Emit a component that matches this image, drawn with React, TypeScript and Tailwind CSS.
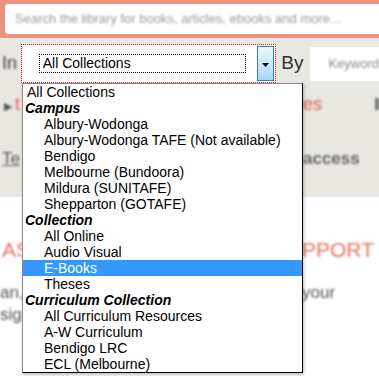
import React from 'react';

type Option = { label: string; kind: 'top' | 'group' | 'item'; selected?: boolean };

const options: Option[] = [
  { label: 'All Collections', kind: 'top' },
  { label: 'Campus', kind: 'group' },
  { label: 'Albury-Wodonga', kind: 'item' },
  { label: 'Albury-Wodonga TAFE (Not available)', kind: 'item' },
  { label: 'Bendigo', kind: 'item' },
  { label: 'Melbourne (Bundoora)', kind: 'item' },
  { label: 'Mildura (SUNITAFE)', kind: 'item' },
  { label: 'Shepparton (GOTAFE)', kind: 'item' },
  { label: 'Collection', kind: 'group' },
  { label: 'All Online', kind: 'item' },
  { label: 'Audio Visual', kind: 'item' },
  { label: 'E-Books', kind: 'item', selected: true },
  { label: 'Theses', kind: 'item' },
  { label: 'Curriculum Collection', kind: 'group' },
  { label: 'All Curriculum Resources', kind: 'item' },
  { label: 'A-W Curriculum', kind: 'item' },
  { label: 'Bendigo LRC', kind: 'item' },
  { label: 'ECL (Melbourne)', kind: 'item' },
];

function OptionRow({ option }: { option: Option }) {
  const base = 'h-[16px] leading-[16px] whitespace-nowrap text-[14px]';
  if (option.kind === 'group') {
    return <div className={`${base} pl-[2px] font-bold italic text-black`}>{option.label}</div>;
  }
  if (option.kind === 'top') {
    return <div className={`${base} pl-[4px] text-black`}>{option.label}</div>;
  }
  return (
    <div className={`${base} pl-[21px] ${option.selected ? 'bg-[#3399ff] text-white' : 'text-black'}`}>
      {option.label}
    </div>
  );
}

export default function App() {
  return (
    <div className="relative w-[379px] h-[376px] overflow-hidden bg-white font-['Liberation_Sans',Arial,sans-serif]">
      {/* page behind the open select */}
      <div className="bg-[#e9e7e2] pb-[28px]">
        <div className="bg-[#e8937e] pt-[4px] pb-[4px] pl-[5px]">
          <div className="h-[30px] bg-white rounded-l-[3px] flex items-center pl-[10px]">
            <span className="blur-[1.2px] text-[13px] text-[#9a9a9a] whitespace-nowrap">
              Search the library for books, articles, ebooks and more...
            </span>
          </div>
        </div>

        <div className="mt-[6px] flex items-center h-[39px]">
          <span className="w-[21px] pl-[2px] text-[18px] text-[#444] blur-[1px]">In</span>
          <div className="w-[259px] h-[39px] border border-dotted border-[#e01010] bg-white flex items-center pl-[17px]">
            <div className="w-[207px] h-[19px] border border-dotted border-black flex items-center pl-[3px] text-[14px] text-black whitespace-nowrap">
              All Collections
            </div>
            <div className="ml-auto mr-[1px] w-[17px] h-[35px] border border-[#3c7fb1] bg-gradient-to-b from-[#eef8fe] to-[#a6d8f4] flex items-center justify-center pt-[2px]">
              <svg width="7" height="4" viewBox="0 0 7 4">
                <path d="M0 0h7L3.5 4z" fill="#000" />
              </svg>
            </div>
          </div>
          <span className="ml-[5px] text-[19px] text-[#333]">By</span>
          <div className="ml-[7px] flex-1 h-[34px] bg-white flex items-center pl-[18px]">
            <span className="blur-[1.2px] text-[13px] text-[#888]">Keyword</span>
          </div>
        </div>

        <div className="mt-[11px] grid grid-cols-[22px_281px_1fr] h-[20px] leading-[20px]">
          <div className="overflow-hidden whitespace-nowrap blur-[1px] text-[18px]">
            <span className="text-[#555] text-[11px] pl-[4px] pr-[3px]">▶</span>
            <span className="text-[#e2604c]">t</span>
          </div>
          <div />
          <div className="flex items-center whitespace-nowrap blur-[1px] text-[18px]">
            <span className="text-[#e2604c]">es</span>
            <span className="ml-auto w-[4px] h-[12px] bg-[#777]" />
          </div>
        </div>

        <div className="mt-[35px] grid grid-cols-[22px_281px_1fr] h-[20px] leading-[20px]">
          <div className="overflow-hidden whitespace-nowrap blur-[1px] text-[17px] text-[#555]">
            <span className="underline pl-[2px]">Te</span>
          </div>
          <div />
          <div className="whitespace-nowrap blur-[1px] text-[17px] font-semibold text-[#666]">access</div>
        </div>
      </div>

      <div className="mt-[41px] grid grid-cols-[22px_280px_1fr] h-[24px] leading-[24px] text-[21px] text-[#e8705e] blur-[1.2px] whitespace-nowrap">
        <div className="overflow-hidden pl-[2px]">AS</div>
        <div />
        <div>PPORT</div>
      </div>
      <div className="mt-[21px] grid grid-cols-[22px_280px_1fr] h-[20px] leading-[20px] text-[17px] text-[#555] blur-[1.2px] whitespace-nowrap">
        <div className="overflow-hidden">an,</div>
        <div />
        <div>your</div>
      </div>
      <div className="mt-[2px] grid grid-cols-[22px_280px_1fr] h-[20px] leading-[20px] text-[17px] text-[#555] blur-[1.2px] whitespace-nowrap">
        <div className="overflow-hidden">sig</div>
        <div />
        <div />
      </div>

      {/* open dropdown list */}
      <div className="absolute left-[22px] top-[83px] w-[281px] border border-[#8a8a8a] border-r-black border-b-black bg-white shadow-[1px_2px_3px_rgba(0,0,0,0.25)]">
        {options.map((option) => (
          <OptionRow key={option.label} option={option} />
        ))}
      </div>
    </div>
  );
}
